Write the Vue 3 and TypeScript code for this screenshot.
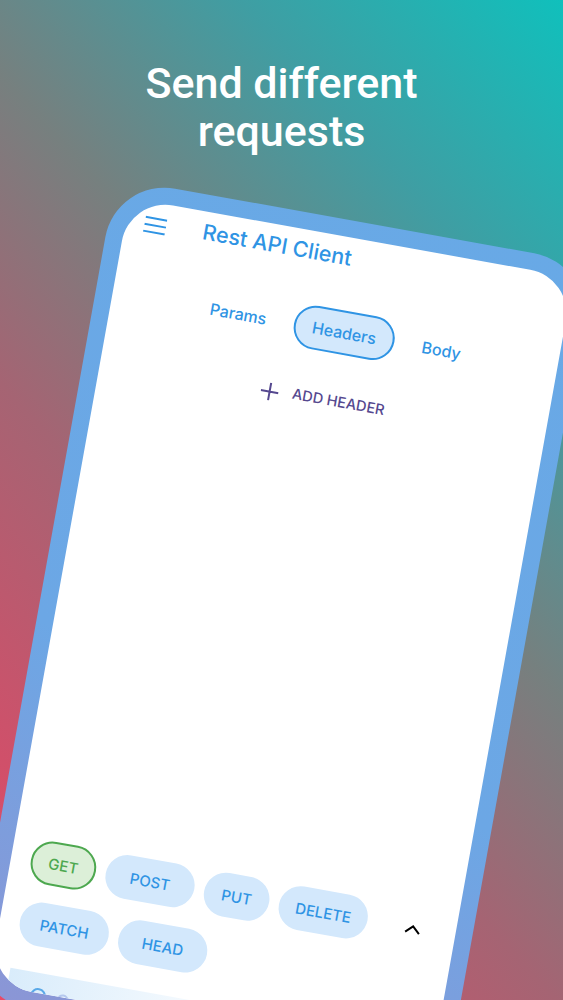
<script setup lang="ts">
const tabs = ['Params', 'Headers', 'Body']
const row1 = ['GET', 'POST', 'PUT', 'DELETE']
const row2 = ['PATCH', 'HEAD']
const isShort = (m: string) => m === 'GET' || m === 'PUT'
</script>

<template>
  <main class="screen">
    <h1 class="headline">Send different<br />requests</h1>
    <section class="phone">
      <div class="display">
        <header class="appbar">
          <svg class="menu" width="22" height="18" viewBox="0 0 22 18" fill="none" stroke="#2f94e4" stroke-width="2">
            <path d="M0 2h22M0 9h22M0 16h22" />
          </svg>
          <span class="title">Rest API Client</span>
        </header>
        <nav class="tabs">
          <span v-for="t in tabs" :key="t" class="tab" :class="{ active: t === 'Headers' }">{{ t }}</span>
        </nav>
        <div class="add">
          <svg class="plus" width="18" height="18" viewBox="0 0 18 18" fill="none" stroke="#55488f" stroke-width="2">
            <path d="M9 0v18M0 9h18" />
          </svg>
          <span>ADD HEADER</span>
        </div>
        <div class="spacer"></div>
        <div class="methods">
          <div class="row">
            <span v-for="m in row1" :key="m" class="chip" :class="{ get: m === 'GET', short: isShort(m) }">{{ m }}</span>
            <svg class="caret" width="18" height="11" viewBox="0 0 18 11" fill="none" stroke="#000" stroke-width="2">
              <path d="M2 9.5 9 3l7 6.5" />
            </svg>
          </div>
          <div class="row">
            <span v-for="m in row2" :key="m" class="chip">{{ m }}</span>
          </div>
        </div>
        <div class="urlbar">
          <svg class="url-icon" width="20" height="20" viewBox="0 0 20 20" fill="none" stroke="#5aa9e8" stroke-width="2">
            <circle cx="10" cy="10" r="7" />
          </svg>
          <svg class="url-icon" width="14" height="20" viewBox="0 0 14 20" fill="none" stroke="#b5c8ee" stroke-width="2">
            <circle cx="7" cy="10" r="5" />
          </svg>
        </div>
      </div>
    </section>
  </main>
</template>

<style scoped>
.screen {
  position: relative;
  width: 563px;
  height: 1000px;
  overflow: hidden;
  background: linear-gradient(48deg, #e84a68 0%, #d0506a 15%, #a56473 38%, #76807f 57%, #3f9ea3 78%, #10c0bc 100%);
}
.headline {
  margin: 0;
  padding-top: 59px;
  text-align: center;
  font: 500 43px/48px Roboto, sans-serif;
  color: #fff;
}
.phone {
  position: absolute;
  left: 116px;
  top: 178px;
  width: 485px;
  height: 833px;
  box-sizing: border-box;
  padding: 17px;
  border-radius: 60px;
  background: linear-gradient(195deg, #68a9e6 0%, #6ca7e5 60%, #8c95d5 100%);
  transform-origin: 0 0;
  transform: rotate(10.2deg);
}
.display {
  display: flex;
  flex-direction: column;
  height: 100%;
  border-radius: 44px;
  background: #fff;
  font-family: Inter, sans-serif;
  font-weight: 500;
  overflow: hidden;
}
.appbar {
  display: flex;
  align-items: flex-start;
  gap: 37px;
  height: 40px;
  padding: 7px 0 0 19px;
  box-sizing: border-box;
}
.menu {
  margin-top: 7px;
}
.title {
  font-size: 21.5px;
  line-height: 26px;
  color: #2f94e4;
}
.tabs {
  display: flex;
  align-items: center;
  justify-content: center;
  gap: 28px;
  height: 44px;
  margin-top: 33px;
  padding-left: 1px;
}
.tab {
  font-size: 16px;
  color: #2f94e4;
}
.tab.active {
  display: flex;
  align-items: center;
  justify-content: center;
  width: 102px;
  height: 44px;
  box-sizing: border-box;
  border: 2px solid #2f94e4;
  border-radius: 22px;
  background: #d3e8fc;
}
.add {
  display: flex;
  align-items: center;
  justify-content: center;
  gap: 14px;
  height: 20px;
  margin-top: 36px;
  font-size: 14.5px;
  color: #55488f;
}
.plus {
  margin-top: 5px;
}
.spacer {
  flex: 1;
}
.methods {
  display: flex;
  flex-direction: column;
  gap: 18px;
  padding-left: 20px;
}
.row {
  display: flex;
  align-items: center;
  gap: 10px;
}
.chip {
  display: flex;
  align-items: center;
  justify-content: center;
  width: 90px;
  height: 44px;
  box-sizing: border-box;
  border-radius: 22px;
  background: #d3e8fc;
  color: #2f94e4;
  font-size: 15px;
}
.chip.short {
  width: 66px;
}
.chip.get {
  border: 2px solid #4da84f;
  background: #dcefd8;
  color: #4da84f;
}
.caret {
  margin-left: 27px;
}
.urlbar {
  display: flex;
  align-items: flex-start;
  gap: 8px;
  height: 20px;
  margin: 26px 0 0 19px;
  padding: 13px 0 0 22px;
  box-sizing: border-box;
  background: linear-gradient(90deg, #d9ecfb, #ffffff 60%);
}
.url-icon {
  flex: none;
}
</style>
